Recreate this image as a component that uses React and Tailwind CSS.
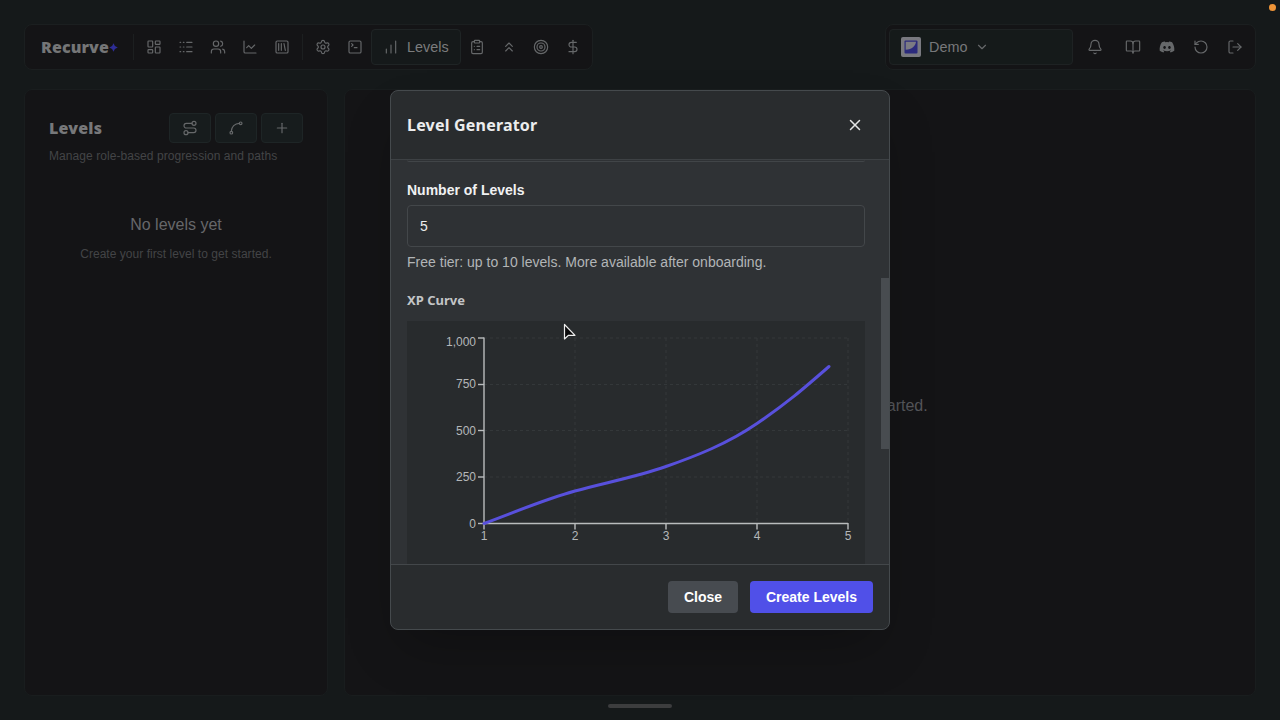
import React from "react";
import {
  Bell,
  BookOpen,
  ChartLine,
  ChartNoAxesColumnIncreasing,
  ChevronDown,
  ChevronsUp,
  ClipboardList,
  DollarSign,
  LayoutDashboard,
  LogOut,
  Logs,
  Plus,
  RotateCcw,
  Route,
  Settings,
  Spline,
  SquareLibrary,
  SquareTerminal,
  Target,
  Users,
  X,
} from "lucide-react";
import { FaDiscord } from "react-icons/fa";

const mainLinks = [LayoutDashboard, Logs, Users, ChartLine, SquareLibrary];
const toolLinks = [Settings, SquareTerminal];
const moreLinks = [ClipboardList, ChevronsUp, Target, DollarSign];

const xTicks = [1, 2, 3, 4, 5];
const yTicks = [
  { label: "1,000", y: 17, textY: 25 },
  { label: "750", y: 63.5, textY: 67 },
  { label: "500", y: 109.5, textY: 114 },
  { label: "250", y: 156, textY: 160 },
  { label: "0", y: 202.5, textY: 207 },
];

function NavIcon({ icon: Icon }) {
  return (
    <button className="w-8 h-9 flex items-center justify-center">
      <Icon size={16} strokeWidth={1.75} />
    </button>
  );
}

function Divider() {
  return <div className="w-px h-[26px] bg-[#1c1f20] mr-1" />;
}

function Navbar() {
  return (
    <nav className="h-[46px] w-[569px] flex items-center rounded-lg border border-[#1b1f20] bg-[#141416] pr-[3px]">
      <div className="w-[108px] pl-4 flex items-center font-['Noto_Sans',sans-serif] text-[16px] font-black tracking-[0.1px] text-[#757677]">
        <span>Recurve</span>
        <svg width="9" height="9" viewBox="0 0 9 9">
          <path d="M4.5 0.2 5.9 3.1 8.8 4.5 5.900 5.900 4.500 8.800 3.100 5.900 0.200 4.500 3.100 3.100Z" fill="#2e2d96" />
        </svg>
      </div>
      <Divider />
      {mainLinks.map((icon, i) => (
        <NavIcon key={i} icon={icon} />
      ))}
      <div className="w-1" />
      <Divider />
      {toolLinks.map((icon, i) => (
        <NavIcon key={i} icon={icon} />
      ))}
      <button className="w-[90px] h-9 shrink-0 flex items-center gap-2 pl-[11px] rounded border border-[#1f2425] bg-[#15191a]">
        <ChartNoAxesColumnIncreasing size={16} strokeWidth={1.75} />
        <span className="pt-0.5 text-[14.4px] text-[#7b7c7d]">Levels</span>
      </button>
      {moreLinks.map((icon, i) => (
        <NavIcon key={i} icon={icon} />
      ))}
    </nav>
  );
}

function AccountBar() {
  return (
    <div className="h-[46px] w-[371px] flex items-center rounded-lg border border-[#1b1f20] bg-[#141416] pl-[3px]">
      <button className="w-[184px] h-9 flex items-center pl-[11px] rounded border border-[#1e2223] bg-[#151a1a]">
        <span className="w-5 h-5 rounded-[2px] bg-[#797980] flex items-center justify-center">
          <svg width="14" height="14" viewBox="0 0 14 14">
            <rect x="0.5" y="0.5" width="13" height="13" rx="1" fill="#2b2a7c" />
            <path d="M1.700 1.700H12C11.500 6 8 9.300 1.700 9.800Z" fill="#7b7b83" />
          </svg>
        </span>
        <span className="ml-2 mr-2 pt-px text-[14.4px] text-[#77787a]">Demo</span>
        <ChevronDown size={14} />
      </button>
      <div className="flex-1 flex items-center pl-[5px]">
        <button className="w-[34px] mr-1 flex justify-center"><Bell size={16} strokeWidth={1.75} /></button>
        <button className="w-[34px] flex justify-center"><BookOpen size={16} strokeWidth={1.75} /></button>
        <button className="w-[34px] flex justify-center"><FaDiscord size={16} /></button>
        <button className="w-[34px] flex justify-center"><RotateCcw size={16} strokeWidth={1.75} /></button>
        <button className="w-[34px] flex justify-center"><LogOut size={16} strokeWidth={1.75} /></button>
      </div>
    </div>
  );
}

function LevelsPanel() {
  return (
    <aside className="w-[304px] rounded-lg border border-[#191d1e] bg-[#141416] px-6 pt-[23px]">
      <div className="flex items-center justify-between h-[30px]">
        <h2 className="font-['Noto_Sans',sans-serif] text-[16px] font-black tracking-[0.2px] text-[#77787a]">Levels</h2>
        <div className="flex gap-1">
          {[Route, Spline, Plus].map((Icon, i) => (
            <button
              key={i}
              className="w-[42px] h-[30px] flex items-center justify-center rounded border border-[#1e2526] bg-[#171c1d]"
            >
              <Icon size={16} strokeWidth={1.75} />
            </button>
          ))}
        </div>
      </div>
      <p className="mt-[5px] text-xs leading-4 tracking-[0.07px] whitespace-nowrap text-[#434446]">
        Manage role-based progression and paths
      </p>
      <div className="mt-[49px] text-center">
        <p className="text-base leading-6 text-[#66676a]">No levels yet</p>
        <p className="mt-[9px] text-xs leading-4 tracking-[0.04px] text-[#434446]">Create your first level to get started.</p>
      </div>
    </aside>
  );
}

function XpChart() {
  return (
    <svg width="458" height="243" viewBox="0 0 458 243" className="block">
      <g stroke="#34383a" strokeDasharray="3 3">
        {yTicks.slice(0, 4).map((t) => (
          <line key={t.label} x1="77" x2="441" y1={t.y} y2={t.y} />
        ))}
        {xTicks.slice(1).map((n) => (
          <line key={n} x1={77 + (n - 1) * 91} x2={77 + (n - 1) * 91} y1="17" y2="202" />
        ))}
      </g>
      <g stroke="#b9bcbd" strokeWidth="1.4">
        <line x1="77" x2="77" y1="16.5" y2="203" />
        <line x1="77" x2="441" y1="202.5" y2="202.5" />
        {yTicks.map((t) => (
          <line key={t.label} x1="71" x2="77" y1={t.y} y2={t.y} />
        ))}
        {xTicks.map((n) => (
          <line key={n} x1={77 + (n - 1) * 91} x2={77 + (n - 1) * 91} y1="202" y2="208.5" />
        ))}
      </g>
      <g fill="#b4b7b9" fontSize="12">
        {yTicks.map((t) => (
          <text key={t.label} x="69" y={t.textY} textAnchor="end">{t.label}</text>
        ))}
        {xTicks.map((n) => (
          <text key={n} x={77 + (n - 1) * 91} y="219" textAnchor="middle">{n}</text>
        ))}
      </g>
      <path
        d="M77 202.500C107 191.500 137 178.500 168 170S229 156 259 145.500S320 123 350 102.500S395 69 422 45.500"
        fill="none"
        stroke="#5850dc"
        strokeWidth="3"
        strokeLinecap="round"
      />
    </svg>
  );
}

function LevelGenerator() {
  return (
    <div className="relative w-[500px] h-[540px] flex flex-col rounded-lg border border-[#454a4d] bg-[#292c2e] overflow-hidden shadow-2xl">
      <header className="h-[69px] shrink-0 flex items-center justify-between pl-4 pr-[25px] border-b border-[#3d4144]">
        <h3 className="font-['Noto_Sans',sans-serif] text-[16px] font-bold tracking-[0.2px] text-[#eceded]">Level Generator</h3>
        <button className="text-[#e4e5e6]"><X size={18} strokeWidth={2} /></button>
      </header>
      <div className="flex-1 min-h-0 overflow-hidden flex bg-[#2f3235]">
        <div className="w-[474px] pl-4">
          <div className="h-[2px] rounded-b border-b border-[#414548]" />
          <label className="block mt-[18px] text-sm leading-5 font-bold text-[#f0f1f2]">Number of Levels</label>
          <input
            className="block mt-[5px] w-full h-[42px] px-3 rounded border border-[#43474a] bg-[#2e3134] text-sm text-[#eceded]"
            defaultValue="5"
          />
          <p className="mt-[5px] text-sm leading-5 tracking-[0.01px] text-[#b2b5b7]">
            Free tier: up to 10 levels. More available after onboarding.
          </p>
          <h4 className="mt-[18px] font-['Noto_Sans',sans-serif] text-[13px] leading-5 font-bold text-[#c3c5c7]">XP Curve</h4>
          <div className="mt-[11px] h-[243px] bg-[#282b2d]">
            <XpChart />
          </div>
        </div>
        <div className="ml-auto w-2 pt-[118px]">
          <div className="h-[171px] bg-[#484c50]" />
        </div>
      </div>
      <footer className="h-[65px] shrink-0 flex items-center justify-end gap-3 pr-4 border-t border-[#43474a] text-sm font-bold text-white">
        <button className="w-[70px] h-8 rounded bg-[#474b50]">Close</button>
        <button className="w-[123px] h-8 rounded bg-[#5050e8]">Create Levels</button>
      </footer>
    </div>
  );
}

export default function App() {
  return (
    <div className="relative w-[1280px] h-[720px] overflow-hidden bg-[#15191a] text-[#66686a] font-['Liberation_Sans',Arial,sans-serif]">
      <div className="h-full flex flex-col px-6 pt-6">
        <div className="flex justify-between">
          <Navbar />
          <AccountBar />
        </div>
        <main className="mt-[19px] h-[607px] flex gap-4">
          <LevelsPanel />
          <section className="flex-1 flex items-center justify-center rounded-lg border border-[#191d1e] bg-[#141416] pl-0.5 pt-[26px] text-base text-[#55565a]">
            Create your first level to get started.
          </section>
        </main>
        <div className="mt-2 mx-auto w-16 h-1 rounded-full bg-[#3c3d3e]" />
      </div>

      <div className="absolute inset-0 flex items-center justify-center">
        <LevelGenerator />
      </div>

      <div className="absolute right-1 top-1 w-[7px] h-[7px] rounded-full bg-[#ee9438]" />
      <svg className="absolute left-[563px] top-[323px]" width="14" height="19" viewBox="0 0 14 19">
        <path d="M1.5 1.5V16L5.5 12.3H12Z" fill="#0b0b0c" stroke="#eeeeee" strokeWidth="1.2" strokeLinejoin="round" />
      </svg>
    </div>
  );
}
